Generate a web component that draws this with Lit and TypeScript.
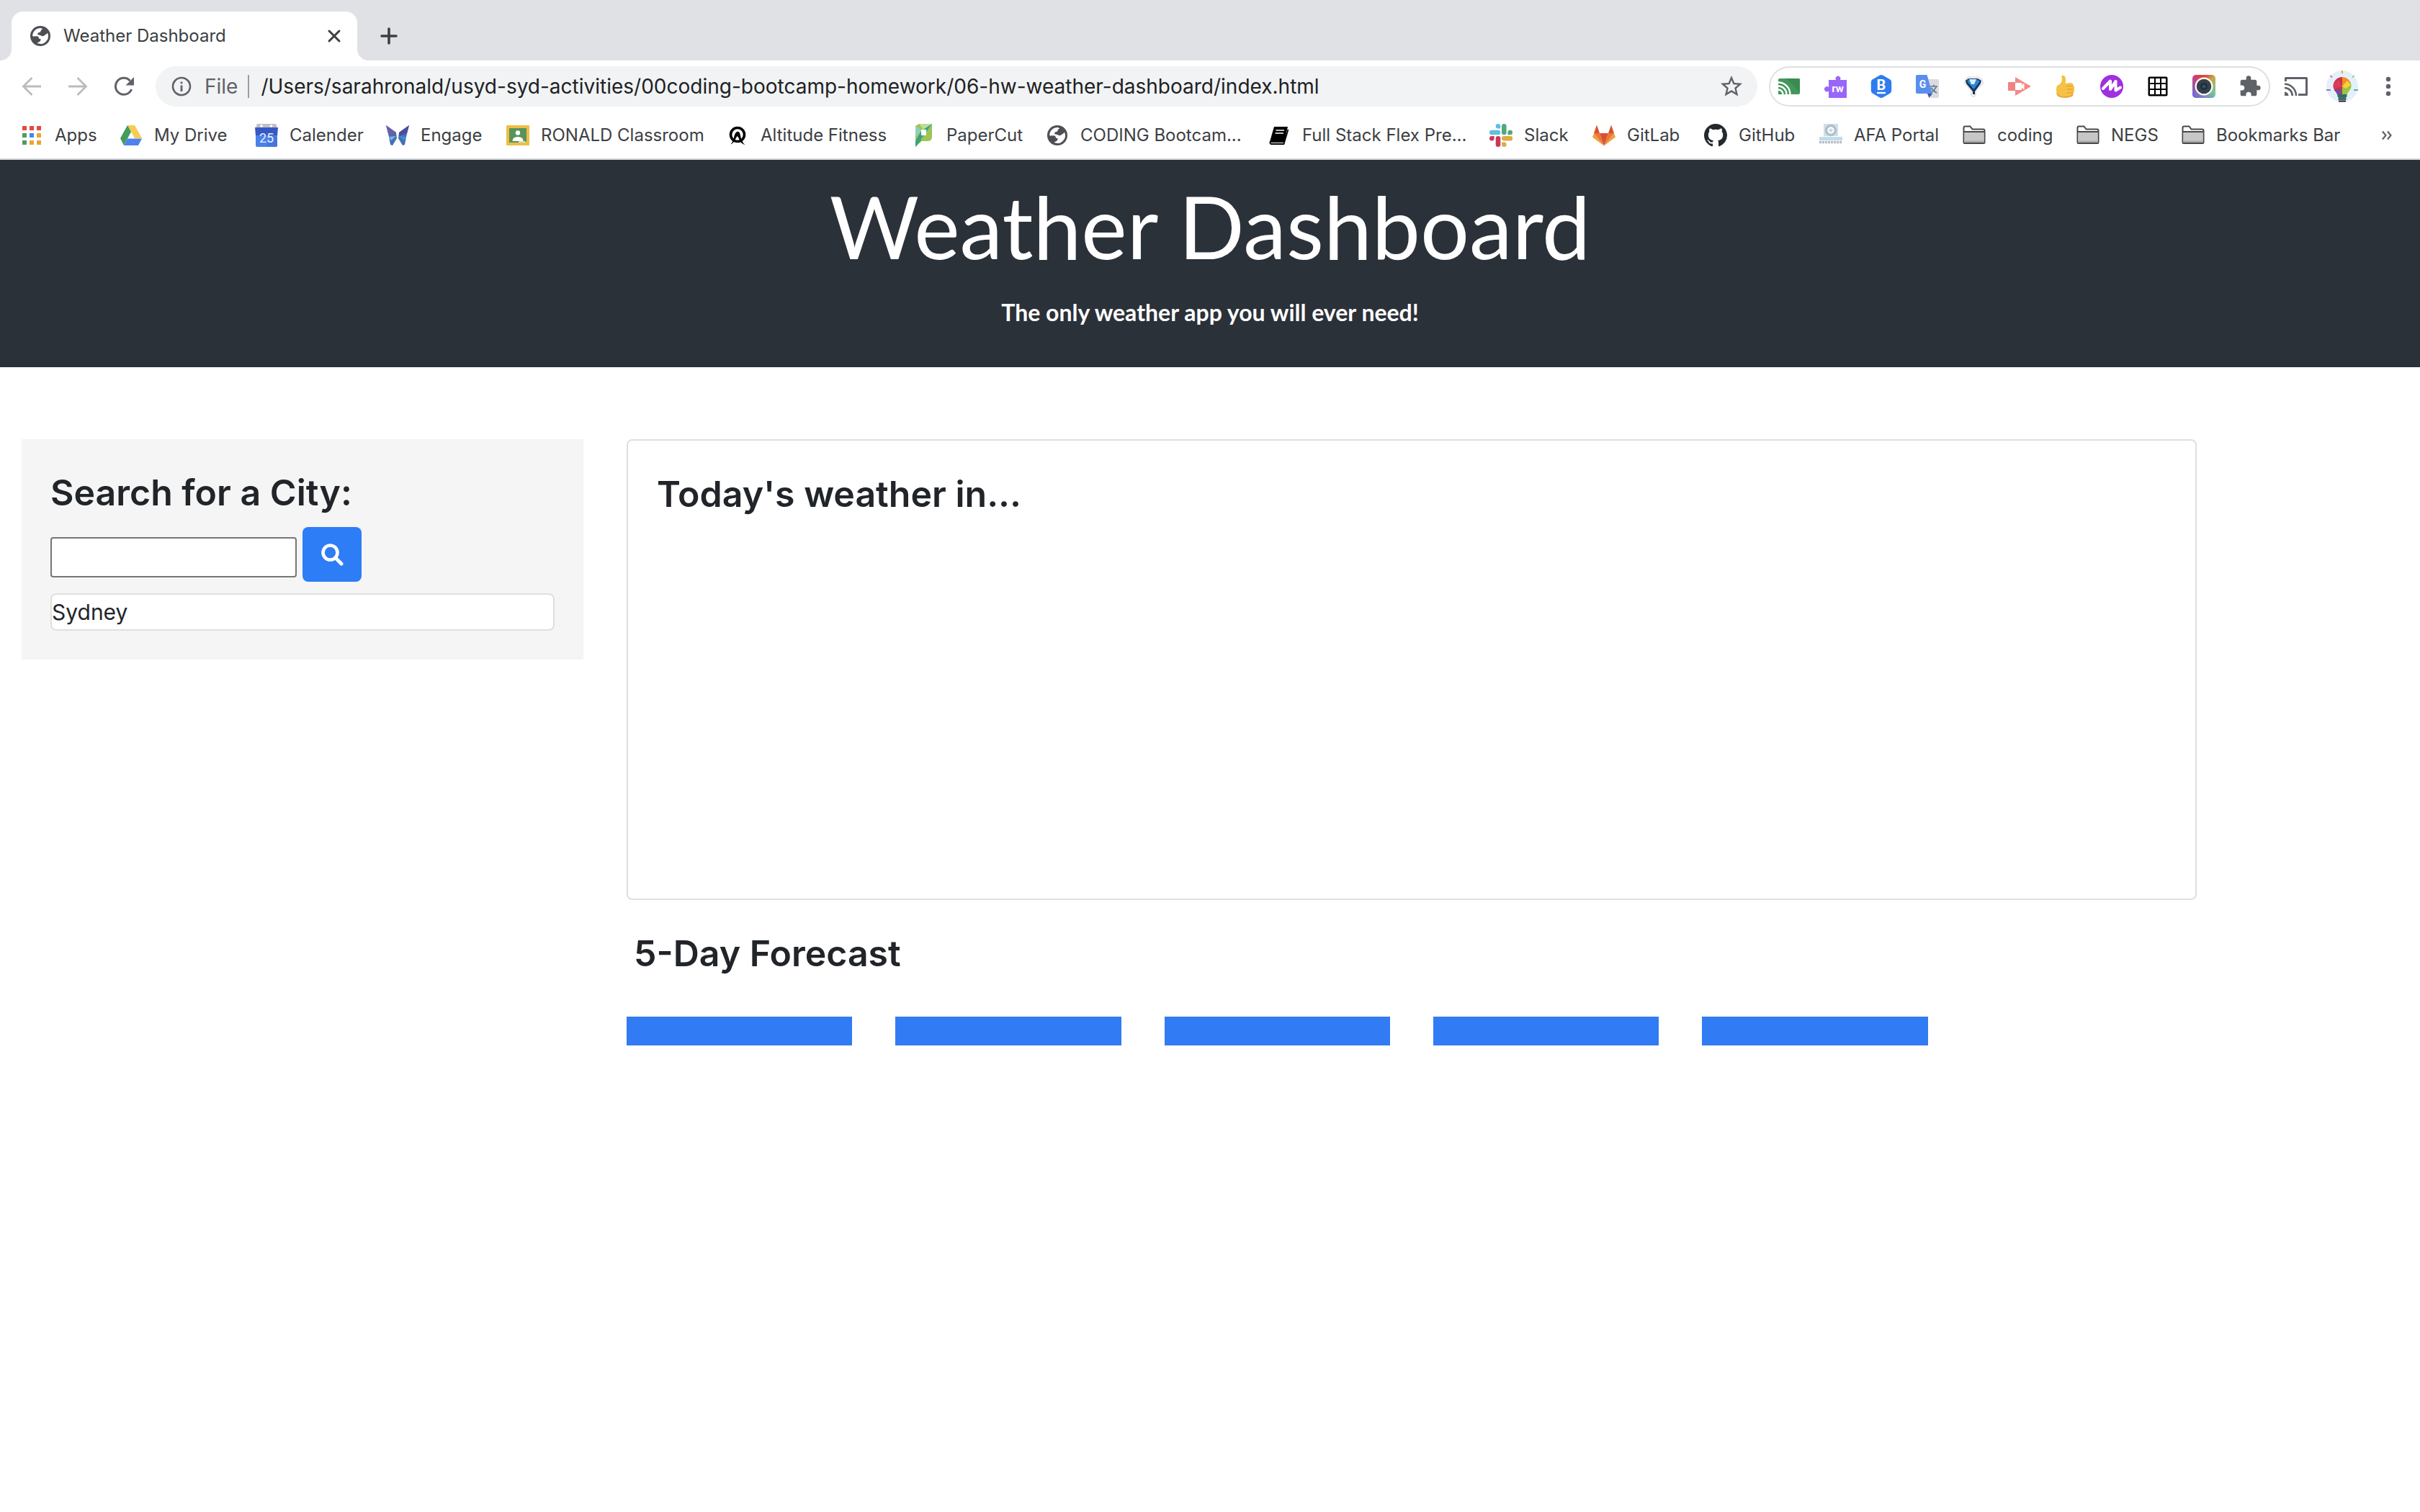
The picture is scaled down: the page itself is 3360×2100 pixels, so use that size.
import { LitElement, html, svg, css, type SVGTemplateResult } from "lit";
import { customElement, property, state } from "lit/decorators.js";

type Glyph = { box: number; art: SVGTemplateResult };

const globe = svg`
  <circle cx="14" cy="14" r="14" fill="#4d4f55"/>
  <path fill="#fff" d="M15 3C9 2.6 4.2 6.6 3.2 12.5C3 14 3.6 14.8 4.6 14.6L9.2 14.2C10.8 14.2 11.8 15.2 11.7 16.6C11.6 18 13 18.2 14.6 18.2C14.6 20 14 21.4 12.4 22.2C11.4 22.7 10.2 23 9.4 23.6C12.6 25.6 16.8 25.6 20.2 23.2C23.6 20.8 25.4 17.4 25 13.6C24.9 12.2 24.6 11 24 9.8C23 11.6 21 11.9 20.2 12.8C19.3 13.8 18.6 14.3 17 14.2C15 14.1 13.8 12.8 11.6 12.6C9.8 12.4 9.6 10.4 11.2 9.4C12.4 8.6 14.2 9.2 14.4 7.4C14.6 5.8 15.6 5 17.2 4.4Z"/>`;

const folder = svg`
  <path d="M1.5 26V5.5Q1.5 3.5 3.5 3.5H10.5L13.5 7.5H28.5Q30.5 7.5 30.5 9.5V26Q30.5 27 29.5 27H2.5Q1.5 27 1.5 26Z" fill="#fff" stroke="#47484b" stroke-width="2"/>
  <path d="M2.5 11.5H29.5V26H2.5Z" fill="#c7c7c7"/>
  <path d="M2.5 23.5H29.5V26H2.5Z" fill="#a9a9a9"/>
  <path d="M1.5 11H30.5" stroke="#47484b" stroke-width="2"/>`;

const puzzle = svg`<path fill="#5f6368" d="M20.5 11H19V7a2 2 0 0 0-2-2h-4V3.5a2.5 2.5 0 0 0-5 0V5H4a2 2 0 0 0-2 2v3.800h1.5a2.700 2.700 0 0 1 0 5.400H2V20a2 2 0 0 0 2 2h3.800v-1.5a2.700 2.700 0 0 1 5.400 0V22H17a2 2 0 0 0 2-2v-4h1.5a2.5 2.5 0 0 0 0-5z"/>`;

const ICONS: Record<string, Glyph> = {
  globe: { box: 28, art: globe },
  close: { box: 24, art: svg`<path d="M5 5L19 19M19 5L5 19" stroke="#3c4043" stroke-width="3" stroke-linecap="round"/>` },
  plus: { box: 24, art: svg`<path d="M12 2V22M2 12H22" stroke="#3c4043" stroke-width="3.6" stroke-linecap="round"/>` },
  back: { box: 28, art: svg`<path d="M27 14H3M14.5 2L2.5 14L14.5 26" fill="none" stroke="#babcbe" stroke-width="2.8"/>` },
  forward: { box: 28, art: svg`<path d="M1 14H25M13.5 2L25.5 14L13.5 26" fill="none" stroke="#babcbe" stroke-width="2.8"/>` },
  reload: { box: 28, art: svg`<path d="M24.6 18A11.5 11.5 0 1 1 22.5 6.2" fill="none" stroke="#5f6368" stroke-width="3"/><path d="M28 1V12.5H16.5Z" fill="#5f6368"/>` },
  info: { box: 28, art: svg`<circle cx="14" cy="14" r="12" fill="none" stroke="#5f6368" stroke-width="2.6"/><path d="M12.6 12.5h2.8V21h-2.8zM12.6 7.5h2.8v2.8h-2.8z" fill="#5f6368"/>` },
  star: { box: 24, art: svg`<path fill="#5f6368" d="M22 9.24l-7.19-.62L12 2 9.19 8.63 2 9.24l5.46 4.73L5.82 21 12 17.27 18.18 21l-1.63-7.03L22 9.24zM12 15.4l-3.76 2.27 1-4.28-3.32-2.88 4.38-.38L12 6.1l1.71 4.04 4.38.38-3.32 2.88 1 4.28L12 15.4z"/>` },
  castgreen: { box: 32, art: svg`
    <path d="M1 7Q1 5 3 5H29Q31 5 31 7V25Q31 27 29 27H1Z" fill="#43975a"/><path d="M12 5H29Q31 5 31 7V24Z" fill="#3b8a50"/>
    <path d="M1 10.500A16.5 16.5 0 0 1 17.5 27M1 15.5A11.5 11.5 0 0 1 12.5 27M1 20.5A6.5 6.5 0 0 1 7.5 27" fill="none" stroke="#fff" stroke-width="2.4"/>` },
  rw: { box: 32, art: svg`<path d="M7 7H17.2A3.4 3.4 0 1 1 22.8 7H32V32H7V22.5A3.6 3.6 0 1 1 7 17Z" fill="#9a66f7"/>
    <text x="19.500" y="24" text-anchor="middle" font-family="Roboto, sans-serif" font-weight="700" font-size="15" fill="#fff">rw</text>` },
  hexb: { box: 32, art: svg`<path d="M13.5 .8Q16 -.6 18.5 .8L28 6.2Q30.2 7.5 30.2 10V22Q30.2 24.5 28 25.8L18.5 31.2Q16 32.6 13.5 31.2L4 25.8Q1.8 24.5 1.8 22V10Q1.8 7.5 4 6.2Z" fill="#2e7cf0"/>
    <text x="16" y="21" text-anchor="middle" font-family="Roboto, sans-serif" font-weight="700" font-size="20" fill="#fff">B</text><path d="M10 25H22" stroke="#fff" stroke-width="2.4"/>` },
  translate: { box: 32, art: svg`<path d="M13 6H30Q32 6 32 8V30Q32 32 30 32H21Z" fill="#d9dbde"/>
    <path d="M20 16H30M25 13.5V16M28.5 16Q26 22 20.5 25M21.5 18Q24 22.5 29 25" fill="none" stroke="#607d8b" stroke-width="1.7"/>
    <path d="M16 26H23L18.5 32Z" fill="#3f51b5"/>
    <path d="M2 0H15.5L23 26H2Q0 26 0 24V2Q0 0 2 0Z" fill="#5a8eee"/>
    <text x="9.5" y="18" text-anchor="middle" font-family="Roboto, sans-serif" font-weight="700" font-size="14" fill="#fff">G</text>` },
  funnel: { box: 32, art: svg`<path d="M5 6L9 3H23L28 7L29.5 11L19 22V28Q16 32 13 28V22L4 11Z" fill="#fff" stroke="#ddd" stroke-width="1.5"/>
    <path d="M5 8L9 5H22L27 8L26 12L18 23V27H15V23L6 12Z" fill="#14365c"/><path d="M7 9L10 6H21L25 9L16.5 20Z" fill="#2b86d9"/><path d="M10 6H20L17 13H13Z" fill="#d9effc"/>` },
  play: { box: 32, art: svg`<path d="M1 10H10V22H1Q0 22 0 21V11Q0 10 1 10Z" fill="#f0837f"/><path d="M10 3L32 16L10 29Z" fill="#f28b87"/>
    <path d="M10 11H19V14L22.5 11.5V20.5L19 18V21H10Z" fill="#fff"/>` },
  thumb: { box: 32, art: svg`<path d="M10 2Q12 -1 15 2Q17 7 15.500 12L22 11Q27 11 26.500 14.500Q29 16 27.500 19.500Q29 22 27 24.500Q27.500 28 24.500 29Q20 32 12 31L6 30Q3 29 3 20Q3 15 6 14Q11 11 11 6Z" fill="#f6c144"/>
    <path d="M17 15.500H26M18 20H27M18 25H26" stroke="#df9a2c" stroke-width="1.2"/><path d="M4 26Q6 31 14 31T26 28" fill="none" stroke="#e3a135" stroke-width="1.6"/>` },
  mote: { box: 32, art: svg`<circle cx="16" cy="16" r="16" fill="#a02fe0"/><path d="M4 19L14 8.5V20L21.5 9V21.5L28 17.5" fill="none" stroke="#fff" stroke-width="4" stroke-linecap="round" stroke-linejoin="round"/>` },
  grid: { box: 32, art: svg`<rect x="2.5" y="2.5" width="27" height="27" rx="2" fill="#000"/>${[5, 13, 21].map((y) => [5, 13, 21].map((x) => svg`<rect x=${x} y=${y} width="6" height="6" fill="#fff"/>`))}` },
  camera: { box: 32, art: svg`<defs><linearGradient id="a" x1="0" y1="0" x2="1" y2="1"><stop offset="0" stop-color="#d8357e"/><stop offset=".3" stop-color="#d84a35"/><stop offset=".5" stop-color="#c9a54a"/><stop offset="1" stop-color="#54d6b4"/></linearGradient><linearGradient id="b" x1="1" y1="0" x2="0" y2="1"><stop offset=".4" stop-color="#7e5cf0" stop-opacity="0"/><stop offset="1" stop-color="#5d5ff5"/></linearGradient></defs>
    <rect width="32" height="32" rx="5" fill="url(#a)"/><rect width="32" height="32" rx="5" fill="url(#b)"/>
    <circle cx="16" cy="16" r="12.5" fill="#fff"/><circle cx="16" cy="16" r="10.3" fill="#36404a"/><circle cx="16" cy="16" r="5" fill="#222b33"/><circle cx="16" cy="16" r="2.6" fill="#24527a"/>` },
  puzzle: { box: 24, art: puzzle },
  cast: { box: 32, art: svg`<path d="M1.5 9V4.5H30.5V27.5H19" fill="none" stroke="#5f6368" stroke-width="3" stroke-linejoin="round"/>
    <path d="M0 12.8A16 16 0 0 1 16 29M0 18A10.8 10.8 0 0 1 10.8 29" fill="none" stroke="#5f6368" stroke-width="2.6"/><path d="M0 23.5A5.5 5.5 0 0 1 5.5 29H0Z" fill="#5f6368"/>` },
  bulb: { box: 44, art: svg`<circle cx="22" cy="22" r="22" fill="#e3f0f8"/>
    <path d="M22 9A12.5 12.5 0 0 0 9.5 21.5C9.5 27 15 30 15.5 34H22Z" fill="#c9304b"/>
    <path d="M22 9A12.5 12.5 0 0 1 34.5 21.5L22 22Z" fill="#f08f25"/><path d="M33 16L34.5 21.5C34.5 27 29 30 28.5 34H22V22Z" fill="#9cc43c"/>
    <path d="M22 22L29 14L34 20L27 25Z" fill="#f4d23c"/><path d="M10.5 27L22 26L20 34H15.5Q14 30 10.5 27Z" fill="#7a4a96"/><path d="M10 18L17 12L22 22L12 25Z" fill="#dd3c56"/>
    <path d="M15.5 33H28.5V36L27 38H17L15.5 36Z" fill="#24716f"/><path d="M16.5 39.5H27.5M17 42.5H27" stroke="#222" stroke-width="2"/>
    <path d="M22 0V4" stroke="#f2a53a" stroke-width="2"/><path d="M5.5 7L8 9.5" stroke="#e25567" stroke-width="1.6"/><path d="M38.5 7L36 9.5" stroke="#9cc43c" stroke-width="1.6"/><path d="M0 27H6" stroke="#8a5aa6" stroke-width="1.6"/><path d="M38 27H44" stroke="#3a9e98" stroke-width="1.6"/>` },
  dots: { box: 32, art: svg`<circle cx="16" cy="6" r="3.2" fill="#5f6368"/><circle cx="16" cy="16" r="3.2" fill="#5f6368"/><circle cx="16" cy="26" r="3.2" fill="#5f6368"/>` },
  apps: { box: 32, art: svg`${["#e34a3e", "#e34a3e", "#e34a3e", "#549a5c", "#4088ee", "#e8a53a", "#549a5c", "#e8a53a", "#e8a53a"].map((c, i) => svg`<rect x=${3 + (i % 3) * 10} y=${3 + Math.floor(i / 3) * 10} width="6" height="6" fill=${c}/>`)}` },
  drive: { box: 32, art: svg`<path d="M11 2H21L31 20H21Z" fill="#f7cb54"/><path d="M11 2L16 11L6 30L1 20Z" fill="#459b5c"/><path d="M11 20.5H31L26 30H6Z" fill="#4c83ec"/>` },
  calendar: { box: 32, art: svg`<rect x="2" y="0" width="28" height="7" rx="2" fill="#c0c0c0"/><circle cx="9" cy="3" r="1.8" fill="#fff"/><circle cx="22.5" cy="3" r="1.8" fill="#fff"/>
    <path d="M0 5H32L31 17H1Z" fill="#3559c4"/><path d="M1 16H31V30Q31 32 29 32H3Q1 32 1 30Z" fill="#4a80ea"/><path d="M16 32L25 14L31 20V30Q31 32 29 32Z" fill="#4376dd"/>
    <text x="16" y="25.5" text-anchor="middle" font-family="Roboto, sans-serif" font-size="18" fill="#e8eefc">25</text>` },
  engage: { box: 32, art: svg`<path d="M0 2L14 12L15 20L9 30L6 29L4 18Z" fill="#4470b4"/><path d="M32 2L18 12L17 20L23 30L26 29L28 18Z" fill="#4470b4"/>
    <path d="M0 2L14 12V17L3 13Z" fill="#6a5ea8"/><path d="M32 2L18 12V17L29 13Z" fill="#514a9e"/><path d="M4 18L14 17L7 23Z" fill="#79b6dc"/><path d="M28 18L18 17L25 23Z" fill="#3c92cc"/>` },
  classroom: { box: 32, art: svg`<rect y="2" width="32" height="28" rx="1" fill="#f0bd42"/><rect x="4" y="6" width="24" height="20" fill="#57935a"/><circle cx="16" cy="12.5" r="3.2" fill="#fff"/><path d="M8.5 24Q8.5 18 16 18T23.5 24Z" fill="#fff"/><path d="M17 26H28L26 24H17Z" fill="#cfe0c8"/>` },
  altitude: { box: 32, art: svg`<circle cx="16" cy="15" r="9.5" fill="none" stroke="#000" stroke-width="3.6"/><path d="M15 11Q19 10 20 16Q21 24 26.5 29.5Q22 28 19 24Q18 19 15.5 17L12 23Q10 27 6.5 28.5Q10 24 11 19Q12 13 15 11Z" fill="#000"/>` },
  papercut: { box: 32, art: svg`<path d="M5 3L10 0H28V18Q28 24 22 24H13L5 32Z" fill="#9bc653"/><path d="M5 3L14 9L5 18Z" fill="#8ed0c0"/><path d="M10 0H28L16 8Z" fill="#bfdc9a"/><path d="M28 0L5 32V24L13 10Z" fill="#38a08a"/><path d="M5 32L13 24V18Z" fill="#43b04c"/><rect x="13" y="8" width="7" height="8" fill="#fff"/>` },
  globe32: { box: 32, art: svg`<g transform="translate(2 2)">${globe}</g>` },
  book: { box: 32, art: svg`<path d="M9 4H28L23 26H5Q3 26 3.5 23Z" fill="#000"/><path d="M11.5 9H23M10.5 13H22" stroke="#fff" stroke-width="1.6"/><path d="M4 24Q2.5 27.5 5 28H22.5L28.5 8" fill="none" stroke="#000" stroke-width="1.8"/>` },
  slack: { box: 32, art: svg`
    <path d="M12 0A3.3 3.3 0 0 0 12 6.6H15.3V3.3A3.3 3.3 0 0 0 12 0Z" fill="#5fbfe0"/><rect y="8.7" width="15.3" height="6.6" rx="3.3" fill="#5fbfe0"/>
    <rect x="17" width="6.6" height="15.3" rx="3.3" fill="#50a97c"/><path d="M32 12A3.3 3.3 0 0 0 25.4 12V15.3H28.7A3.3 3.3 0 0 0 32 12Z" fill="#50a97c"/>
    <rect x="17" y="17" width="15.3" height="6.6" rx="3.3" fill="#dcac48"/><path d="M20.3 32A3.3 3.3 0 0 0 20.3 25.4H17V28.7A3.3 3.3 0 0 0 20.3 32Z" fill="#dcac48"/>
    <rect x="8.7" y="17" width="6.6" height="15" rx="3.3" fill="#c8375a"/><path d="M0 20.3A3.3 3.3 0 0 0 6.6 20.3V17H3.3A3.3 3.3 0 0 0 0 20.3Z" fill="#c8375a"/>` },
  gitlab: { box: 32, art: svg`<path d="M6 1.5L10 13H2Z" fill="#d9512f"/><path d="M26 1.5L30 13H22Z" fill="#d9512f"/><path d="M16 30.5L2 13L0 18.5Z" fill="#eda13c"/><path d="M16 30.5L30 13L32 18.5Z" fill="#eda13c"/><path d="M16 30.5L10 13H2Z" fill="#ec7538"/><path d="M16 30.5L22 13H30Z" fill="#ec7538"/><path d="M16 30.5L10 13H22Z" fill="#d9512f"/>` },
  github: { box: 16, art: svg`<path fill="#24292e" fill-rule="evenodd" d="M8 0C3.58 0 0 3.58 0 8c0 3.54 2.29 6.53 5.47 7.59.4.07.55-.17.55-.38 0-.19-.01-.82-.01-1.49-2.01.37-2.53-.49-2.69-.94-.09-.23-.48-.94-.82-1.13-.28-.15-.68-.52-.01-.53.63-.01 1.08.58 1.23.82.72 1.21 1.87.87 2.33.66.07-.52.28-.87.51-1.07-1.78-.2-3.64-.89-3.64-3.95 0-.87.31-1.59.82-2.15-.08-.2-.36-1.02.08-2.12 0 0 .67-.21 2.2.82.64-.18 1.32-.27 2-.27s1.36.09 2 .27c1.53-1.04 2.2-.82 2.2-.82.44 1.1.16 1.92.08 2.12.51.56.82 1.27.82 2.15 0 3.07-1.87 3.75-3.65 3.95.29.25.54.73.54 1.48 0 1.07-.01 1.93-.01 2.2 0 .21.15.46.55.38A8.01 8.01 0 0 0 16 8c0-4.42-3.58-8-8-8z"/>` },
  afa: { box: 32, art: svg`<rect x="6" y="0" width="20" height="17" fill="#cfe0ea"/><circle cx="16" cy="9" r="6.5" fill="#fff" stroke="#b3bfc7" stroke-width="3.5"/><circle cx="16" cy="9" r="2.6" fill="#c2dced"/><rect y="18" width="32" height="5" fill="#c0dcee"/><path d="M0 25.500H32" stroke="#b9bcc0" stroke-width="3.5" stroke-dasharray="3 1"/>` },
  folder: { box: 32, art: folder },
  more: { box: 16, art: svg`<path d="M2 2.5L6.5 8L2 13.5M9 2.5L13.5 8L9 13.5" fill="none" stroke="#5f6368" stroke-width="2.2"/>` },
  search: { box: 32, art: svg`<circle cx="13.5" cy="13.5" r="10" fill="none" stroke="#fff" stroke-width="4.6"/><path d="M21 21L29 29" stroke="#fff" stroke-width="5" stroke-linecap="round"/>` },
};

@customElement("ui-icon")
class UiIcon extends LitElement {
  @property() name = "";
  static styles = css`
    :host { display: block; flex: none; }
    svg { display: block; width: 100%; height: 100%; }
  `;
  render() {
    const icon = ICONS[this.name];
    return html`<svg viewBox="0 0 ${icon.box} ${icon.box}" fill="none" aria-hidden="true">${icon.art}</svg>`;
  }
}

const baseStyles = css`
  :host { display: block; font-family: Inter, "Liberation Sans", sans-serif; }
  * { box-sizing: border-box; }
  button { font: inherit; color: inherit; background: none; border: 0; padding: 0; cursor: pointer; }
  a { color: inherit; text-decoration: none; }
  .s16 { width: 16px; height: 16px; }
  .s24 { width: 24px; height: 24px; }
  .s28 { width: 28px; height: 28px; }
  .s32 { width: 32px; height: 32px; }
  .s36 { width: 36px; height: 36px; }
  .s44 { width: 44px; height: 44px; }
`;

const EXTENSIONS: [string, string][] = [
  ["castgreen", "Screen sharing"],
  ["rw", "Read and write"],
  ["hexb", "Blocks"],
  ["translate", "Translate"],
  ["funnel", "Filter"],
  ["play", "Screen recorder"],
  ["thumb", "Thumbs up"],
  ["mote", "Voice notes"],
  ["grid", "Grid view"],
  ["camera", "Camera"],
  ["puzzle", "Extensions"],
];

const BOOKMARKS: [string, string][] = [
  ["apps", "Apps"],
  ["drive", "My Drive"],
  ["calendar", "Calender"],
  ["engage", "Engage"],
  ["classroom", "RONALD Classroom"],
  ["altitude", "Altitude Fitness"],
  ["papercut", "PaperCut"],
  ["globe32", "CODING Bootcam..."],
  ["book", "Full Stack Flex Pre..."],
  ["slack", "Slack"],
  ["gitlab", "GitLab"],
  ["github", "GitHub"],
  ["afa", "AFA Portal"],
  ["folder", "coding"],
  ["folder", "NEGS"],
  ["folder", "Bookmarks Bar"],
];

@customElement("browser-chrome")
class BrowserChrome extends LitElement {
  @property() address = "";
  static styles = [
    baseStyles,
    css`
      .tabs { display: flex; align-items: flex-end; height: 84px; padding-left: 16px; background: #dfe1e5; }
      .tab { position: relative; display: flex; align-items: center; width: 480px; height: 68px; padding: 0 20px 0 26px; background: #fff; border-radius: 16px 16px 0 0; color: #3c4043; font-size: 24px; }
      .tab::before, .tab::after { content: ""; position: absolute; bottom: 0; width: 16px; height: 16px; }
      .tab::before { right: 100%; background: radial-gradient(circle at 0 0, transparent 16px, #fff 16px); }
      .tab::after { left: 100%; background: radial-gradient(circle at 100% 0, transparent 16px, #fff 16px); }
      .tab-title { flex: 1; margin-left: 18px; white-space: nowrap; line-height: 32px; }
      .new-tab { display: grid; place-items: center; width: 56px; height: 68px; margin-left: 16px; }
      .toolbar { display: flex; align-items: center; gap: 8px; height: 72px; padding: 0 16px; background: #fff; }
      .tool { display: grid; place-items: center; flex: none; width: 56px; height: 56px; }
      .omnibox { display: flex; flex: 1; align-items: center; height: 56px; margin: 0 8px; padding: 0 8px 0 22px; border-radius: 28px; background: #f1f3f4; font-size: 28px; }
      .scheme { margin-left: 18px; color: #5f6368; }
      .divider { width: 2px; height: 32px; margin: 0 16px 0 14px; background: #9a9da1; }
      .address { flex: 1; min-width: 0; height: 40px; padding: 0; border: 0; outline: 0; background: none; color: #202124; font: inherit; }
      .extensions { display: flex; flex: none; gap: 8px; border-radius: 28px; box-shadow: inset 0 0 0 2px #dfe0e2; }
      .bookmarks { display: flex; align-items: center; height: 66px; padding: 0 28px; border-bottom: 2px solid #d5d9dd; background: #fff; color: #3c4043; font-size: 24px; line-height: 32px; }
      .links { flex: 1; display: grid; grid-template-columns: 138fr 188fr 182fr 167fr 305fr 258fr 186fr 308fr 308fr 143fr 155fr 160fr 199fr 158fr 146fr 271fr; margin: 0; padding: 0; list-style: none; }
      .link { display: flex; align-items: center; gap: 16px; white-space: nowrap; }
      .overflow { display: grid; place-items: center; width: 32px; height: 32px; padding-right: 4px; }
    `,
  ];
  render() {
    return html`
      <div class="tabs">
        <div class="tab">
          <ui-icon class="s28" name="globe"></ui-icon>
          <span class="tab-title">Weather Dashboard</span>
          <button aria-label="Close tab"><ui-icon class="s24" name="close"></ui-icon></button>
        </div>
        <button class="new-tab" aria-label="New tab"><ui-icon class="s24" name="plus"></ui-icon></button>
      </div>
      <div class="toolbar">
        <button class="tool" aria-label="Back"><ui-icon class="s28" name="back"></ui-icon></button>
        <button class="tool" aria-label="Forward"><ui-icon class="s28" name="forward"></ui-icon></button>
        <button class="tool" aria-label="Reload"><ui-icon class="s28" name="reload"></ui-icon></button>
        <div class="omnibox">
          <ui-icon class="s28" name="info"></ui-icon>
          <label class="scheme" for="address">File</label>
          <span class="divider"></span>
          <input class="address" id="address" type="text" .value=${this.address} />
          <button class="tool" aria-label="Bookmark this page"><ui-icon class="s36" name="star"></ui-icon></button>
        </div>
        <div class="extensions">
          ${EXTENSIONS.map(([icon, label]) => html`<button class="tool" aria-label=${label}><ui-icon class="s32" name=${icon}></ui-icon></button>`)}
        </div>
        <button class="tool" aria-label="Cast"><ui-icon class="s32" name="cast"></ui-icon></button>
        <button class="tool" aria-label="Profile"><ui-icon class="s44" name="bulb"></ui-icon></button>
        <button class="tool" aria-label="Menu"><ui-icon class="s32" name="dots"></ui-icon></button>
      </div>
      <nav class="bookmarks">
        <ul class="links">
          ${BOOKMARKS.map(([icon, label]) => html`<li><a class="link" href="#"><ui-icon class="s32" name=${icon}></ui-icon>${label}</a></li>`)}
        </ul>
        <button class="overflow" aria-label="More bookmarks"><ui-icon class="s16" name="more"></ui-icon></button>
      </nav>
    `;
  }
}

@customElement("app-root")
class AppRoot extends LitElement {
  @state() private cities = ["Sydney"];
  static styles = [
    baseStyles,
    css`
      :host { min-height: 100vh; background: #fff; color: #212529; }
      h1, h2, p { margin: 0; }
      .banner { padding: 12px 0 52px; background: #2b3139; color: #fff; text-align: center; font-family: Lato, "Open Sans", sans-serif; }
      .banner-title { font-size: 120px; line-height: 160px; font-weight: 400; }
      .banner-tagline { padding-top: 16px; font-size: 32px; line-height: 48px; font-weight: 700; }
      .layout { display: grid; grid-template-columns: repeat(12, 1fr); align-items: start; margin-top: 100px; }
      .heading { padding-top: 2px; font-size: 50px; line-height: 64px; font-weight: 600; }
      .search { grid-column: span 3; margin: 0 30px; padding: 40px; background: #f5f5f5; }
      .search-form { display: flex; align-items: flex-end; gap: 8px; margin: 16px 0; }
      .city-input { width: 342px; height: 56px; margin-bottom: 6px; padding: 2px 4px; border: 2px solid #767676; border-radius: 4px; background: #fff; font: inherit; font-size: 30px; }
      .search-button { display: grid; place-items: center; width: 82px; height: 76px; border-radius: 8px; background: #2d7df6; }
      .history { margin: 0; padding: 0; list-style: none; }
      .city { display: block; width: 100%; height: 52px; border: 2px solid #dfdfdf; border-radius: 8px; background: #fff; font-size: 30px; line-height: 48px; text-align: left; }
      .results { grid-column: span 8; padding: 0 30px; }
      .today { min-height: 640px; padding: 40px; border: 2px solid #dfdfdf; border-radius: 8px; }
      .forecast-heading { padding: 42px 10px 56px; }
      .days { display: grid; grid-template-columns: repeat(6, 1fr); gap: 60px; }
      .day { height: 40px; background: #317bf5; }
    `,
  ];
  private submit(e: Event) {
    e.preventDefault();
    const input = this.renderRoot.querySelector<HTMLInputElement>("#city")!;
    const name = input.value.trim();
    if (name) this.cities = [...this.cities, name];
    input.value = "";
  }
  render() {
    return html`
      <browser-chrome address="/Users/sarahronald/usyd-syd-activities/00coding-bootcamp-homework/06-hw-weather-dashboard/index.html"></browser-chrome>
      <header class="banner">
        <h1 class="banner-title">Weather Dashboard</h1>
        <p class="banner-tagline">The only weather app you will ever need!</p>
      </header>
      <main class="layout">
        <aside class="search">
          <h2 class="heading"><label for="city">Search for a City:</label></h2>
          <form class="search-form" @submit=${this.submit}>
            <input class="city-input" id="city" type="text" />
            <button class="search-button" type="submit" aria-label="Search"><ui-icon class="s32" name="search"></ui-icon></button>
          </form>
          <ul class="history">
            ${this.cities.map((c) => html`<li><button class="city">${c}</button></li>`)}
          </ul>
        </aside>
        <section class="results">
          <article class="today"><h2 class="heading">Today's weather in...</h2></article>
          <h2 class="heading forecast-heading">5-Day Forecast</h2>
          <div class="days">${[1, 2, 3, 4, 5].map(() => html`<div class="day"></div>`)}</div>
        </section>
      </main>
    `;
  }
}
